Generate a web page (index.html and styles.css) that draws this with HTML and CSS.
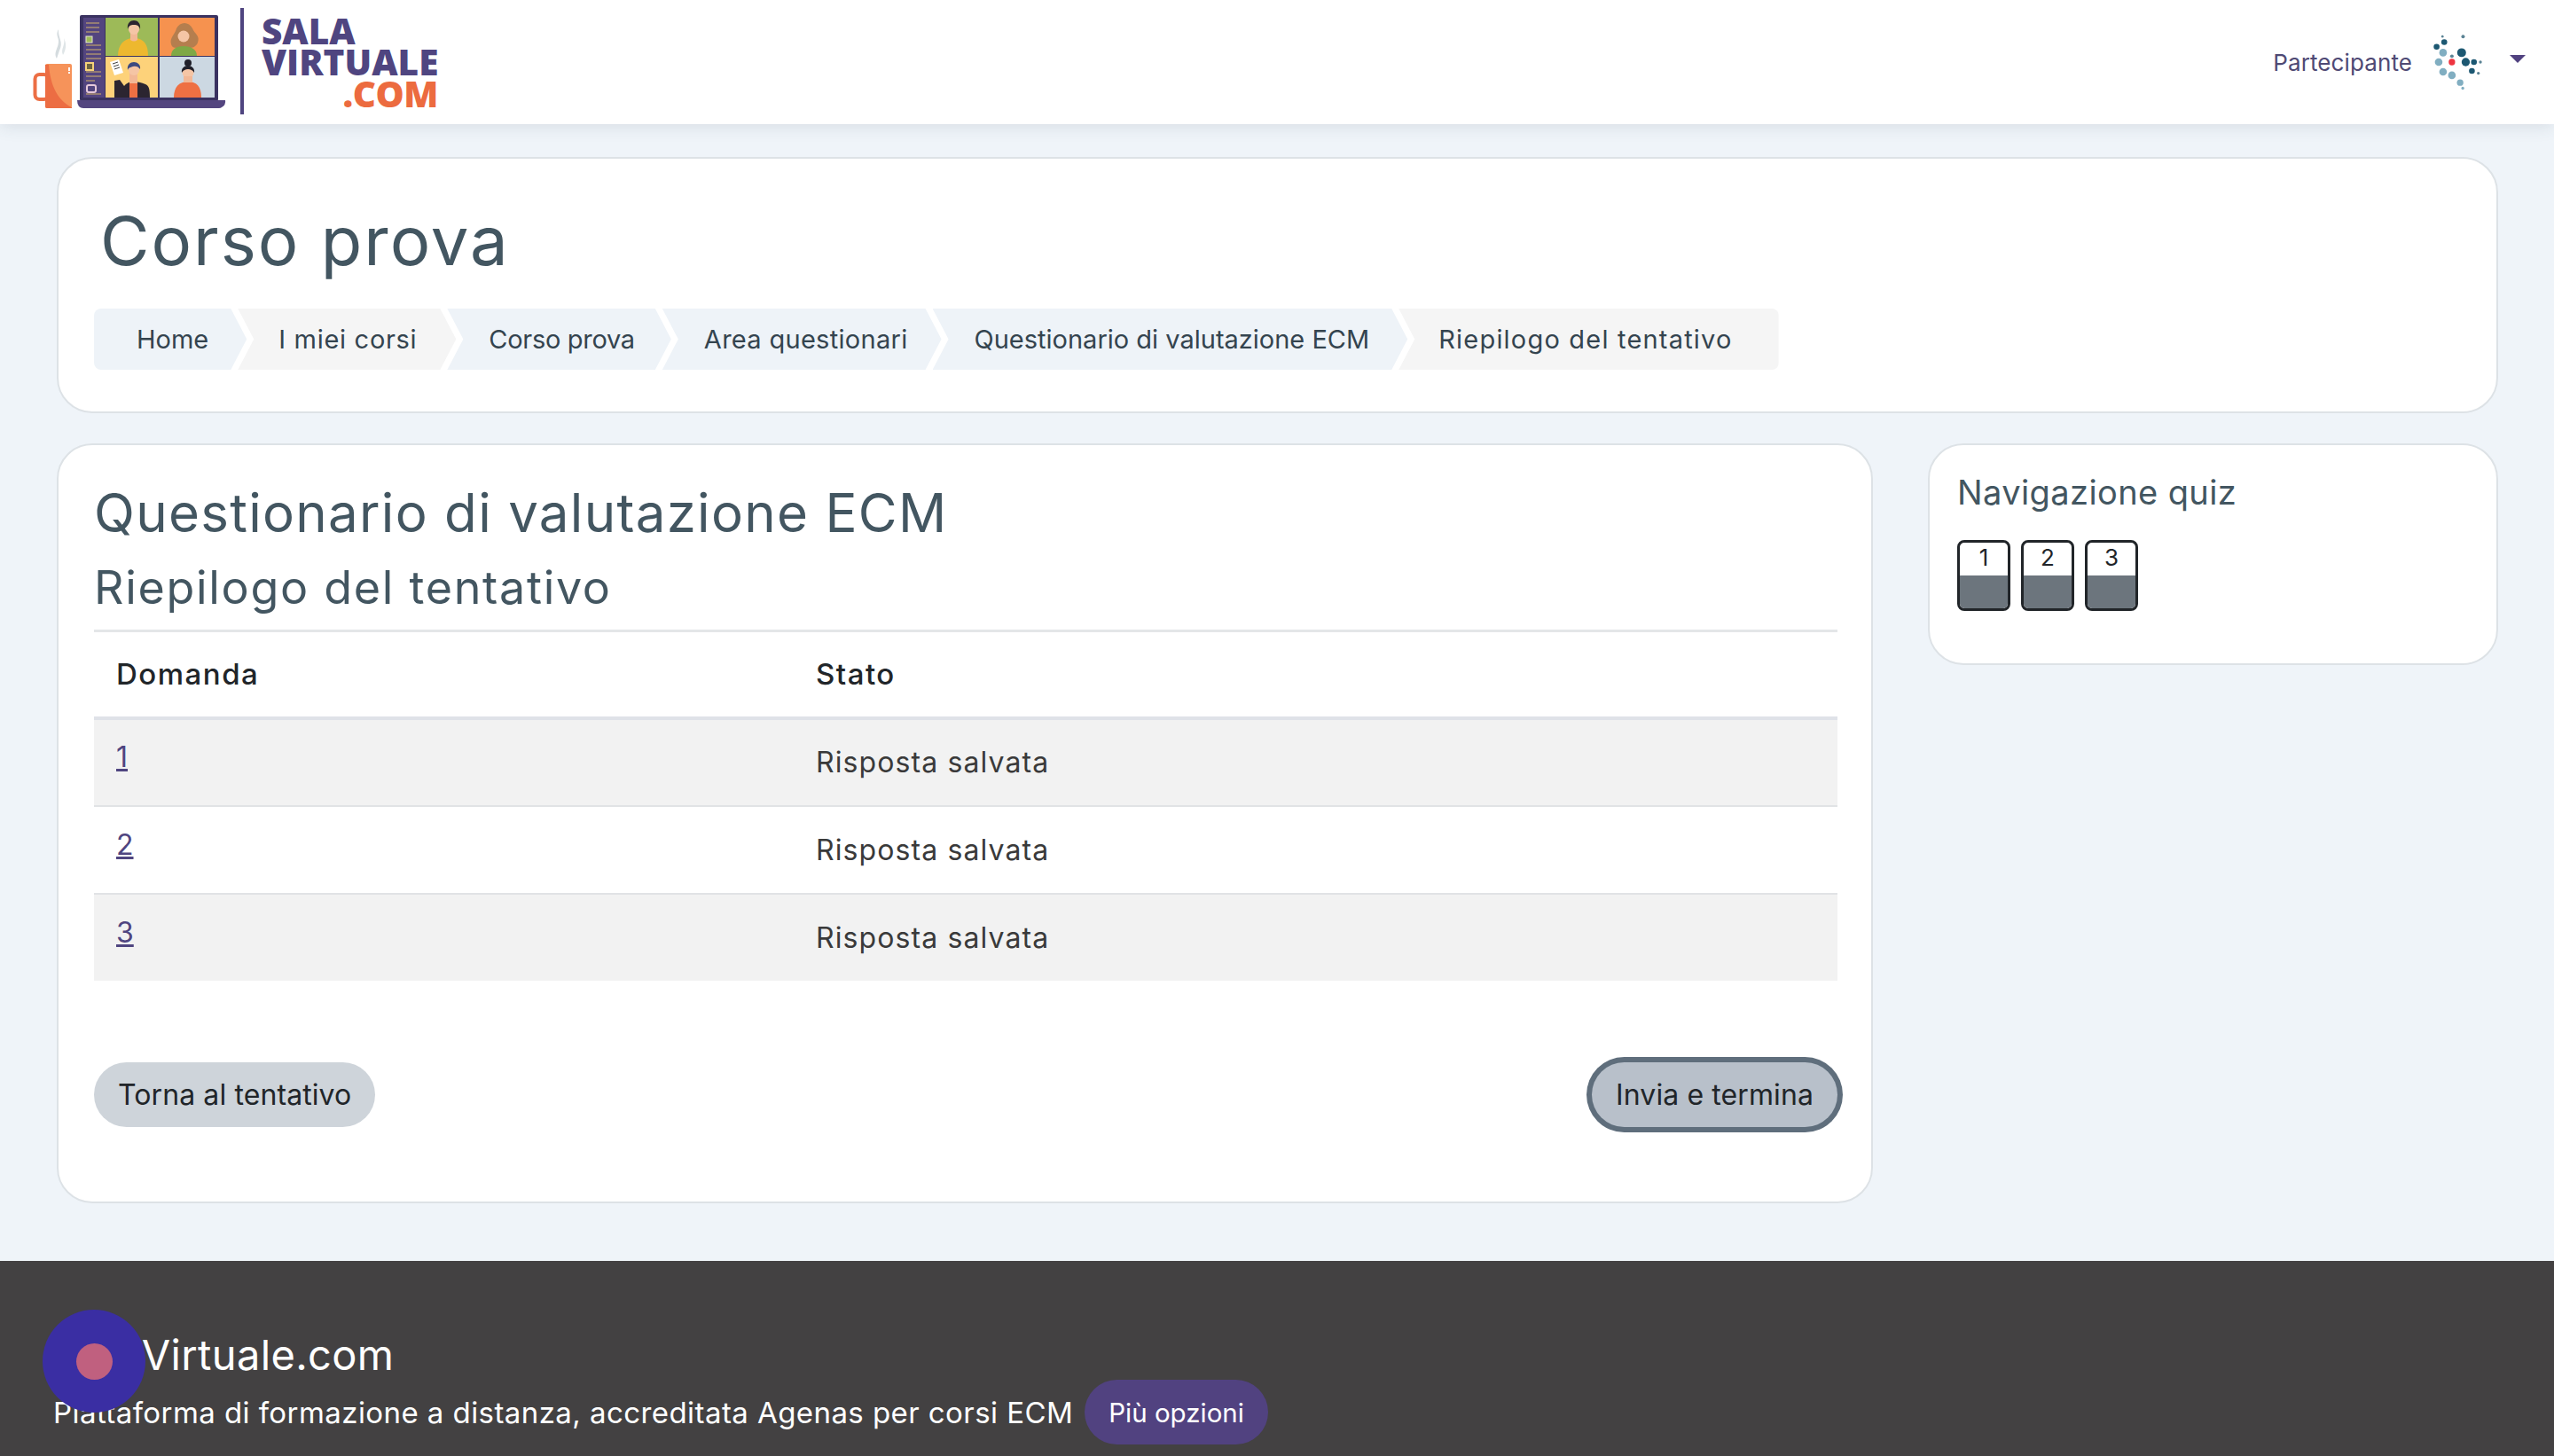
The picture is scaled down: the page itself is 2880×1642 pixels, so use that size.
FILE: index.html
```html
<!DOCTYPE html>
<html lang="it">
<head>
    <meta charset="UTF-8">
    <title>Riepilogo del tentativo</title>
    <link rel="stylesheet" href="styles.css">
</head>
<body>
    <header class="navbar">
        <a class="logo" href="#">
            <svg class="logo-art" viewBox="36 0 240 140" aria-hidden="true">
                <!-- mug -->
                <path d="M64 66c-5-8 5-14 1-24-1-3-1-6 1-9-1 9 6 14 1 24-1 3-2 6-3 9z" fill="#d5dcdf"/>
                <path d="M71 62c-3-7 3-11 1-19 3 6 3 12-1 19z" fill="#dfe5e7"/>
                <rect x="39.500" y="84" width="15" height="28" rx="5" fill="none" stroke="#ec6f45" stroke-width="4"/>
                <rect x="51" y="72" width="30" height="50" rx="2" fill="#f6935a"/>
                <path d="M51 73h4c2 24 10 40 26 48v1H53q-2 0-2-2z" fill="#ec6d43"/>
                <rect x="77" y="76" width="2" height="4" fill="#fff"/>
                <rect x="77" y="81" width="2" height="2" fill="#fff"/>
                <!-- laptop -->
                <rect x="90" y="17" width="156" height="97" rx="2" fill="#3a3260"/>
                <rect x="94" y="20" width="24" height="90" fill="#53457f"/>
                <path d="M97 26h15M97 31h15M97 36h15M97 51h17M97 56h17M97 61h17M97 66h17M97 81h17M97 86h17M97 91h10M97 106h17" stroke="#a98e72" stroke-width="1.500"/>
                <rect x="97" y="41" width="7" height="7" fill="#9dba58" stroke="#e8e4d0"/>
                <rect x="97" y="71" width="8" height="8" fill="#6e6540" stroke="#f5d27a" stroke-width="2"/>
                <rect x="98" y="96" width="10" height="8" rx="2" fill="#53457f" stroke="#e5c8da" stroke-width="2"/>
                <rect x="119" y="20" width="59" height="43" fill="#9dba58"/>
                <rect x="180" y="20" width="62" height="43" fill="#f6924f"/>
                <rect x="119" y="64" width="59" height="46" fill="#fdd27a"/>
                <rect x="180" y="64" width="62" height="46" fill="#ccd8e2"/>
                <!-- green tile -->
                <path d="M133 63c0-12 6-20 18-20s16 8 16 20z" fill="#edb82f"/>
                <path d="M147 37h8v8q-4 3-8 0z" fill="#f2b896"/>
                <circle cx="151" cy="33" r="6" fill="#f5c5a5"/>
                <path d="M144 33c-1-7 3-10 7-10s8 3 7 10c-1-4-3-5-7-5s-6 1-7 5z" fill="#2c2430"/>
                <!-- orange tile -->
                <path d="M193 50c-2-8 4-10 6-18 4-8 14-8 18 0 2 6 9 8 6 16-2 5-6 6-10 6h-14c-3 0-5-1-6-4z" fill="#b57e4e"/>
                <path d="M193 63c0-7 5-11 14-11s15 4 15 11z" fill="#7fa845"/>
                <circle cx="207" cy="41" r="6.500" fill="#f5c5a5"/>
                <!-- yellow tile -->
                <path d="M129 110V91l6-1 5 7c2-3 6-5 10-5s10 1 14 3 5 5 5 15z" fill="#2b2530"/>
                <rect x="146" y="94" width="9" height="16" fill="#ee7043"/>
                <rect x="146" y="82" width="9" height="12" fill="#f2b896"/>
                <circle cx="151" cy="79" r="6" fill="#f5c5a5"/>
                <path d="M144 79c-1-6 3-9 7-9s8 3 7 8c-2-3-5-4-8-3s-5 1-6 4z" fill="#3d4a80"/>
                <path d="M124 70l10-3 5 15-10 3z" fill="#fff"/>
                <path d="M127 72l6-2M128 75l6-2M129 78l6-2" stroke="#444" stroke-width="1"/>
                <!-- blue tile -->
                <path d="M196 110c0-12 6-18 16-18s15 6 15 18z" fill="#ee7043"/>
                <circle cx="212" cy="71" r="4" fill="#20202a"/>
                <circle cx="212" cy="82" r="6.500" fill="#f5c5a5"/>
                <path d="M205 82c-1-5 3-8 7-8s8 3 7 8c-2-3-4-4-7-4s-5 1-7 4z" fill="#20202a"/>
                <rect x="207" y="86" width="10" height="7" fill="#f2b896"/>
                <path d="M87 113h167q1 5-4 8-1 1-3 1H94q-3 0-5-2-2-3-2-7z" fill="#53457f"/>
                <rect x="271" y="9" width="4" height="120" fill="#4f4580"/>
            </svg>
            <span class="logo-text">
                <span class="logo-line">SALA</span>
                <span class="logo-line">VIRTUALE</span>
                <span class="logo-line logo-com">.COM</span>
            </span>
        </a>
        <div class="user-menu">
            <span class="user-name">Partecipante</span>
            <svg class="avatar" viewBox="720 110 190 210" aria-hidden="true">
                <g fill="#1d5872">
                    <circle cx="769" cy="147" r="10"/><circle cx="743" cy="163" r="10"/><circle cx="828" cy="183" r="15"/>
                    <circle cx="842" cy="215" r="14"/><circle cx="870" cy="215" r="10"/><circle cx="863" cy="245" r="10"/>
                </g>
                <g fill="#81aec1">
                    <circle cx="765" cy="183" r="13"/><circle cx="750" cy="215" r="13"/><circle cx="765" cy="248" r="13"/>
                    <circle cx="795" cy="260" r="13"/><circle cx="823" cy="285" r="11"/><circle cx="832" cy="304" r="5"/>
                </g>
                <g fill="#5b8394">
                    <circle cx="833" cy="128" r="6"/><circle cx="763" cy="128" r="4"/><circle cx="795" cy="195" r="6"/>
                    <circle cx="892" cy="215" r="5"/><circle cx="885" cy="253" r="5"/>
                </g>
                <circle cx="795" cy="215" r="11" fill="#ee3540"/>
            </svg>
            <span class="caret"></span>
        </div>
    </header>

    <main class="page">
        <section class="card page-header">
            <h1>Corso prova</h1>
            <nav class="breadcrumb">
                <a class="crumb" href="#">Home</a>
                <a class="crumb crumb-alt crumb-corsi" href="#">I miei corsi</a>
                <a class="crumb crumb-corso" href="#">Corso prova</a>
                <a class="crumb crumb-area" href="#">Area questionari</a>
                <a class="crumb" href="#">Questionario di valutazione ECM</a>
                <span class="crumb crumb-alt crumb-last">Riepilogo del tentativo</span>
            </nav>
        </section>

        <div class="columns">
            <section class="card quiz-main">
                <h2>Questionario di valutazione ECM</h2>
                <h3>Riepilogo del tentativo</h3>
                <table class="summary">
                    <thead>
                        <tr><th class="col-q">Domanda</th><th>Stato</th></tr>
                    </thead>
                    <tbody>
                        <tr><td class="num"><a href="#">1</a></td><td>Risposta salvata</td></tr>
                        <tr><td class="num"><a href="#">2</a></td><td>Risposta salvata</td></tr>
                        <tr><td class="num"><a href="#">3</a></td><td>Risposta salvata</td></tr>
                    </tbody>
                </table>
                <div class="actions">
                    <button class="btn">Torna al tentativo</button>
                    <button class="btn btn-focus">Invia e termina</button>
                </div>
            </section>

            <aside class="card quiz-nav">
                <h4>Navigazione quiz</h4>
                <div class="qn-buttons">
                    <a class="qn" href="#"><span class="qn-num">1</span><span class="qn-fill"></span></a>
                    <a class="qn" href="#"><span class="qn-num">2</span><span class="qn-fill"></span></a>
                    <a class="qn" href="#"><span class="qn-num">3</span><span class="qn-fill"></span></a>
                </div>
            </aside>
        </div>
    </main>

    <footer class="footer">
        <div class="footer-title">Sala Virtuale.com</div>
        <div class="footer-row">
            <span class="footer-text">Piattaforma di formazione a distanza, accreditata Agenas per corsi ECM</span>
            <button class="btn-more">Più opzioni</button>
        </div>
        <div class="help-blob"><span class="help-dot"></span></div>
    </footer>
</body>
</html>
```

FILE: styles.css
```css
* {
    box-sizing: border-box;
}

html, body {
    margin: 0;
    padding: 0;
}

body {
    background-color: #eff4f9;
    font-family: Inter, "Liberation Sans", sans-serif;
    color: #343a40;
    height: 1642px;
    overflow: hidden;
}

/* Navbar */
.navbar {
    display: flex;
    justify-content: space-between;
    align-items: center;
    height: 140px;
    padding: 0 32px 0 36px;
    background-color: #fff;
    box-shadow: 0 2px 18px rgba(60, 80, 90, 0.14);
}

.logo {
    display: flex;
    align-items: center;
    text-decoration: none;
}

.logo-art {
    width: 240px;
    height: 140px;
}

.logo-text {
    display: flex;
    flex-direction: column;
    width: 199px;
    margin-left: 19px;
    font-family: "Open Sans", sans-serif;
    font-weight: 800;
    font-size: 40.5px;
    line-height: 35.5px;
    color: #4f4580;
}

.logo-com {
    text-align: right;
    letter-spacing: -0.5px;
    color: #ec6b3f;
}

.user-menu {
    display: flex;
    align-items: center;
}

.user-name {
    font-size: 26px;
    letter-spacing: 0.1px;
    color: #4f4a75;
}

.avatar {
    width: 63px;
    height: 70px;
    margin-left: 20px;
}

.caret {
    width: 0;
    height: 0;
    margin: -8px 0 0 27px;
    border-left: 9px solid transparent;
    border-right: 9px solid transparent;
    border-top: 9px solid #514280;
}

/* Cards */
.page {
    padding: 37px 63px 0 64px;
}

.card {
    background-color: #fff;
    border: 2px solid #dde2e6;
    border-radius: 40px;
}

.page-header {
    height: 289px;
    padding: 42px 40px 0;
}

h1, h2, h3, h4 {
    margin: 0;
    font-weight: 400;
    color: #435661;
}

h1 {
    margin-left: 7px;
    font-size: 76px;
    letter-spacing: 2px;
    line-height: 100px;
}

/* Breadcrumb */
.breadcrumb {
    display: flex;
    margin-top: 27px;
}

.crumb {
    display: block;
    height: 69px;
    margin-right: -10px;
    padding: 0 43px 0 47px;
    font-size: 29px;
    line-height: 69px;
    white-space: nowrap;
    text-decoration: none;
    color: #34444f;
    background-color: #eef3f8;
    clip-path: polygon(0 0, calc(100% - 18px) 0, 100% 50%, calc(100% - 18px) 100%, 0 100%, 18px 50%);
}

.crumb-alt {
    background-color: #f5f5f5;
}

.crumb-corsi {
    padding: 0 44px 0 46px;
    letter-spacing: 0.7px;
}

.crumb-corso {
    padding-right: 41px;
    letter-spacing: -0.3px;
}

.crumb-area {
    padding-right: 38px;
    letter-spacing: 0.3px;
}

.crumb:first-child {
    padding-left: 48px;
    border-radius: 8px 0 0 8px;
    clip-path: polygon(0 0, calc(100% - 18px) 0, 100% 50%, calc(100% - 18px) 100%, 0 100%);
}

.crumb-last {
    margin-right: 0;
    padding: 0 52px 0 45px;
    letter-spacing: 1.2px;
    border-radius: 0 8px 8px 0;
    clip-path: polygon(0 0, 100% 0, 100% 100%, 0 100%, 18px 50%);
}

/* Layout */
.columns {
    display: flex;
    align-items: flex-start;
    gap: 62px;
    margin-top: 34px;
}

.quiz-main {
    width: 2048px;
    height: 857px;
    padding: 40px 38px 0 40px;
}

h2 {
    font-size: 60px;
    letter-spacing: 1.3px;
    line-height: 72px;
}

h3 {
    margin-top: 13px;
    font-size: 52px;
    letter-spacing: 1.7px;
    line-height: 72px;
}

.quiz-nav {
    flex: 1;
    height: 250px;
    padding: 29px 31px 0;
}

h4 {
    font-size: 38px;
    letter-spacing: 0.4px;
    line-height: 48px;
}

/* Table */
.summary {
    width: 100%;
    margin-top: 11px;
    table-layout: fixed;
    border-collapse: collapse;
    border-top: 3px solid #e4e6e8;
    font-size: 32px;
    letter-spacing: 1.1px;
}

.summary th {
    height: 98px;
    padding: 0 26px;
    text-align: left;
    font-size: 33px;
    font-weight: 500;
    letter-spacing: 1.5px;
    color: #212529;
    border-bottom: 4px solid #dfe2e8;
}

.summary th.col-q {
    width: 788px;
    padding-left: 25px;
}

.summary td {
    height: 99px;
    padding: 0 26px;
    color: #3a3a3a;
    border-bottom: 2px solid #e1e3e5;
}

.summary tr:last-child td {
    height: 98px;
    border-bottom: none;
}

.summary tr:nth-child(odd) td {
    background-color: #f2f2f2;
}

.summary td.num {
    padding: 0 26px 12px 25px;
    letter-spacing: 0;
}

.summary a {
    color: #4f4580;
}

/* Buttons */
.actions {
    display: flex;
    justify-content: space-between;
    margin-top: 92px;
}

.btn {
    height: 73px;
    padding: 0 27px;
    border: none;
    border-radius: 37px;
    background-color: #ced4da;
    color: #212529;
    font-family: inherit;
    font-size: 32px;
    letter-spacing: 0.1px;
}

.btn-focus {
    background-color: #b8c0ca;
    box-shadow: 0 0 0 6px #5f6e7c;
}

.qn-buttons {
    display: flex;
    gap: 12px;
    margin-top: 30px;
}

.qn {
    display: flex;
    flex-direction: column;
    width: 60px;
    height: 80px;
    overflow: hidden;
    border: 3px solid #212529;
    border-radius: 8px;
    color: #212529;
    text-decoration: none;
    font-size: 26px;
    text-align: center;
}

.qn-num {
    height: 37px;
    line-height: 34px;
}

.qn-fill {
    flex: 1;
    background-color: #6c757d;
}

/* Footer */
.footer {
    position: relative;
    height: 220px;
    margin-top: 65px;
    padding: 76px 60px 0;
    background-color: #434142;
    color: #fff;
}

.footer-title {
    font-size: 47px;
    letter-spacing: 0.35px;
    word-spacing: -9.5px;
    line-height: 60px;
}

.footer-row {
    display: flex;
    align-items: center;
    gap: 13px;
    margin-top: -2px;
}

.footer-text {
    font-size: 33px;
    letter-spacing: 0.43px;
}

.btn-more {
    height: 73px;
    padding: 0 27px;
    border: none;
    border-radius: 37px;
    background-color: #514280;
    color: #fff;
    font-family: inherit;
    font-size: 29.5px;
}

.help-blob {
    position: absolute;
    left: 48px;
    top: 55px;
    display: flex;
    justify-content: center;
    align-items: center;
    width: 116px;
    height: 116px;
    border-radius: 50%;
    background-color: #3a2ea3;
}

.help-dot {
    width: 41px;
    height: 41px;
    border-radius: 50%;
    background-color: #c0607f;
}
```
